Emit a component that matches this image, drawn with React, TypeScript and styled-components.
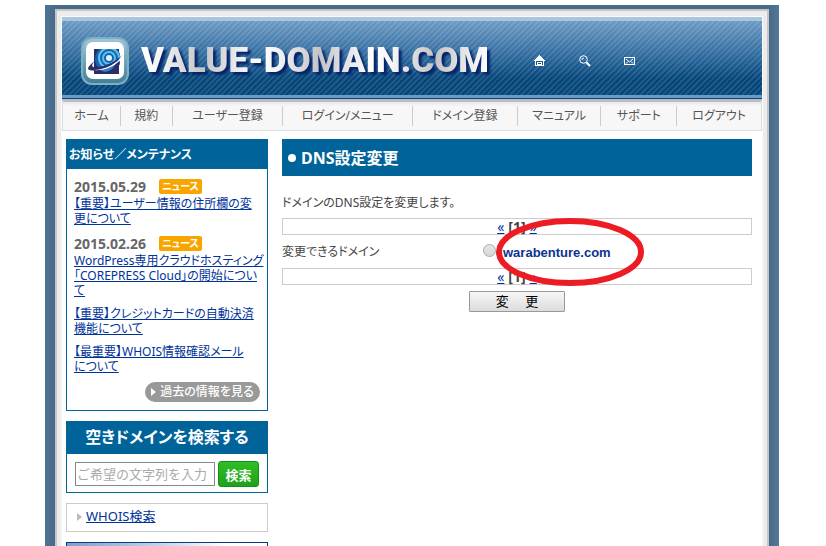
import React from "react";
import styled, { createGlobalStyle } from "styled-components";

const GlobalStyle = createGlobalStyle`
  *, *::before, *::after { box-sizing: border-box; }
  body {
    margin: 0;
    background: #fff;
    color: #444;
    font-family: "Noto Sans", "Noto Sans CJK JP", sans-serif;
    font-size: 12px;
    line-height: 15px;
    font-feature-settings: "palt";
  }
  a { color: #039; }
  h1, h2, p, ul { margin: 0; padding: 0; }
  ul { list-style: none; }
  button, input { font-family: inherit; font-feature-settings: inherit; }
`;

const Backdrop = styled.div`
  display: flex;
  margin: 5px 47px 0 45px;
  padding: 4px 10px 0;
  min-height: calc(100vh - 5px);
  background: linear-gradient(90deg, #4f7496, #48698a 10px, #48698a calc(100% - 10px), #527899);
`;

const Frame = styled.div`
  flex: 1;
  display: flex;
  flex-direction: column;
  min-width: 0;
  padding: 6px 5px 0;
  background: #ececec;
  border: 2px solid #c5c6c8;
  border-bottom: 0;
`;

const Sheet = styled.div`
  flex: 1;
  display: flex;
  flex-direction: column;
  background: #fff;
  box-shadow: 0 0 0 1px #fafafa;
`;

const Header = styled.header`
  display: flex;
  align-items: center;
  height: 82px;
  padding: 3px 19px 0;
  border-top: 4px solid #a9c7dc;
  border-bottom: 1px solid #04457a;
  background:
    linear-gradient(#6b9cc6, #6b9cc6) bottom / 100% 3px no-repeat,
    repeating-linear-gradient(135deg, rgba(255, 255, 255, 0.11) 0 2px, transparent 2px 4px),
    linear-gradient(#6b9ac3 0%, #2f6a9e 45%, #04457a 75%, #04457a 100%);
`;

const Brand = styled.a`
  display: flex;
  align-items: center;
  gap: 12px;
  text-decoration: none;
`;

const BrandName = styled.span`
  font: 900 35px/44px Roboto, sans-serif;
  white-space: nowrap;
  color: transparent;
  background: repeating-linear-gradient(90deg, #fff 0, #f4f4f4 20px, #c4c4c8 62px, #e4e4e6 90px, #fff 116px);
  background-clip: text;
  filter: drop-shadow(3px 3px 1px #06246a);
`;

const Tools = styled.nav`
  display: flex;
  flex: 1;
  gap: 33px;
  padding-left: 45px;
`;

const ToolLink = styled.a`
  display: flex;
`;

const Menu = styled.nav`
  display: grid;
  grid-template-columns: 58fr 52fr 111fr 130fr 105fr 84fr 76fr 84fr;
  align-items: center;
  height: 32px;
  border: 1px solid #ddd;
  border-top: 3px solid #bcbcc2;
  background: linear-gradient(#e9e9ea, #f7f7f7 4px);
`;

const MenuLink = styled.a`
  display: flex;
  justify-content: center;
  align-items: center;
  height: 20px;
  padding-bottom: 2px;
  border-right: 1px solid #ccc;
  color: #555;
  text-decoration: none;
  white-space: nowrap;
  &:last-child { border-right: 0; }
`;

const Columns = styled.div`
  flex: 1;
  display: grid;
  grid-template-columns: 202px minmax(0, 1fr);
  gap: 14px;
  padding: 8px 10px 0 4px;
`;

const Sidebar = styled.aside`
  display: flex;
  flex-direction: column;
  gap: 10px;
`;

const Panel = styled.section`
  border: 1px solid #069;
`;

const PanelTitle = styled.h2<{ $centered?: boolean }>`
  height: ${(p) => (p.$centered ? 32 : 29)}px;
  padding: 0 2px;
  background: #00649a;
  color: #fff;
  font-size: ${(p) => (p.$centered ? 16 : 12)}px;
  font-weight: bold;
  line-height: ${(p) => (p.$centered ? 30 : 29)}px;
  text-align: ${(p) => (p.$centered ? "center" : "left")};
`;

const NewsList = styled.ul`
  display: flex;
  flex-direction: column;
  gap: 8px;
  padding: 10px 7px 8px;
  white-space: nowrap;
`;

const NewsMeta = styled.div`
  display: flex;
  align-items: center;
  gap: 13px;
  height: 15px;
  color: #666;
  font-size: 14px;
  font-weight: bold;
  margin-bottom: 2px;
`;

const Badge = styled.span`
  width: 43px;
  border-radius: 2px;
  background: #f8a500;
  color: #fff;
  font-size: 10px;
  text-align: center;
`;

const DatedItem = styled.li`
  & + & { margin-top: 2px; }
`;

const PastRow = styled.div`
  display: flex;
  justify-content: flex-end;
  padding: 0 7px 8px;
`;

const PastButton = styled.button`
  display: flex;
  align-items: center;
  justify-content: center;
  gap: 4px;
  width: 115px;
  height: 20px;
  padding: 0;
  border: 0;
  border-radius: 10px;
  background: #999;
  color: #fff;
  font-size: 12px;
  line-height: 18px;
  font-weight: 500;
  white-space: nowrap;
`;

const SearchForm = styled.form`
  display: flex;
  align-items: center;
  gap: 3px;
  padding: 7px 8px 5px;
`;

const SearchInput = styled.input`
  flex: 1;
  min-width: 0;
  height: 24px;
  padding: 0 1px;
  border: 1px solid #888;
  font-size: 13px;
  font-feature-settings: normal;
  &::placeholder { color: #aaa; opacity: 1; }
`;

const SearchButton = styled.button`
  width: 41px;
  height: 26px;
  padding: 0;
  border: 1px solid #169018;
  border-radius: 3px;
  background: linear-gradient(#30bd25, #1da31a);
  color: #fff;
  font-size: 13px;
  font-weight: bold;
`;

const LinkBox = styled.div`
  display: flex;
  align-items: center;
  gap: 4px;
  height: 29px;
  padding: 0 10px 2px;
  border: 1px solid #ccc;
  font-size: 13px;
`;

const Banner = styled.div`
  flex: 1;
  min-height: 4px;
  border: 1px solid #0c3a7e;
  border-bottom: 0;
  background: linear-gradient(90deg, #7f9fd0, #a9bfe2 30%, #fff 80%);
`;

const PageTitle = styled.h1`
  display: flex;
  align-items: center;
  gap: 5px;
  height: 37px;
  padding: 0 6px;
  background: #00649a;
  color: #fff;
  font-size: 16px;
  line-height: 20px;
`;

const Dot = styled.span`
  width: 8px;
  height: 8px;
  border-radius: 50%;
  background: #fff;
`;

const Lead = styled.p`
  margin: 19px 0 8px;
`;

const Pager = styled.nav`
  display: flex;
  justify-content: center;
  align-items: center;
  gap: 4px;
  height: 17px;
  border: 1px solid #ccc;
  font-size: 14px;
`;

const DomainRow = styled.div`
  display: grid;
  grid-template-columns: 20fr 27fr;
  align-items: center;
  height: 33px;
`;

const Choice = styled.div`
  display: flex;
  align-items: center;
  gap: 7px;
  padding-left: 1px;
`;

const Radio = styled.input`
  appearance: none;
  width: 13px;
  height: 13px;
  margin: 0 0 2px;
  border: 1px solid #aaa;
  border-radius: 50%;
  background: linear-gradient(#e6e6e6, #d6d6d6);
  &:checked { background: #555; }
`;

const DomainLabel = styled.label`
  position: relative;
  padding-top: 2px;
  color: #0c3390;
  font: bold 13px/15px "Liberation Sans", sans-serif;
`;

const Mark = styled.svg`
  position: absolute;
  left: -8px;
  top: 50%;
  transform: translateY(-50%);
  pointer-events: none;
`;

const SubmitRow = styled.div`
  display: flex;
  justify-content: center;
  padding-top: 6px;
`;

const SubmitButton = styled.button`
  width: 96px;
  height: 21px;
  padding: 0;
  border: 1px solid #999;
  border-radius: 1px;
  background: linear-gradient(#f6f6f6, #dcdcdc);
  color: #000;
  font-size: 13px;
  line-height: 17px;
  white-space: pre;
`;

const Emblem = () => (
  <svg width="48" height="48" viewBox="0 0 48 48" aria-hidden="true">
    <defs>
      <linearGradient id="rim" x1="0" y1="0" x2="0" y2="1">
        <stop offset="0" stopColor="#a2c8d9" />
        <stop offset="1" stopColor="#407f96" />
      </linearGradient>
      <clipPath id="tile"><rect x="13" y="12" width="26" height="25" /></clipPath>
    </defs>
    <rect x="1" y="1" width="46" height="46" rx="10" fill="url(#rim)" stroke="#7dafc5" strokeWidth="2" />
    <rect x="5" y="5" width="38" height="37" rx="7" fill="#fff" />
    <rect x="13" y="12" width="25" height="25" fill="#2b2d66" />
    <g clipPath="url(#tile)">
      <circle cx="27" cy="22" r="13" fill="#1564b0" />
      <g fill="none" stroke="#5cc1ed" strokeWidth="2">
        <circle cx="28" cy="21" r="10" />
        <circle cx="28" cy="21" r="6" />
      </g>
      <circle cx="28" cy="21" r="3" fill="#d8f3ff" />
      <path d="M13 31 Q25 31 38 21 V37 H13Z" fill="#2b2d66" />
      <path d="M17 30 Q29 29 36 23 Q33 34 24 35 Q19 34 17 30Z" fill="#327fc2" />
    </g>
    <path d="M14 24 C4 31 5 35 16 33 C27 31 38 25 41 18 C36 24 26 29 17 30 C11 31 9 29 14 24Z" fill="#2b2d66" />
    <path d="M12 33 C25 33 36 26 41 19 L41 21 C34 30 23 34 12 33Z" fill="#fff" />
  </svg>
);

const HomeIcon = () => (
  <svg width="12" height="12" viewBox="0 0 12 12" shapeRendering="crispEdges" aria-hidden="true">
    <path d="M5 0 H6 V1 H7 V2 H8 V3 H9 V4 H10 V5 H11 V6 H10 V11 H1 V6 H0 V5 H1 V4 H2 V3 H3 V2 H4 V1 H5Z" fill="#fff" />
    <path d="M2 6 H9 V10 H2Z" fill="#1a5588" />
    <path d="M3 7 H8 V10 H3Z" fill="#fff" />
    <path d="M4 8 H7 V9 H4Z" fill="#1a5588" />
  </svg>
);

const SearchIcon = () => (
  <svg width="12" height="12" viewBox="0 0 12 12" fill="none" stroke="#fff" aria-hidden="true">
    <circle cx="4.5" cy="4.5" r="3.8" />
    <path d="M3 5 Q3 3 5 3" />
    <path d="M7.5 7.5 L11 11" strokeWidth="2" />
  </svg>
);

const MailIcon = () => (
  <svg width="12" height="12" viewBox="0 0 12 12" fill="none" stroke="#fff" aria-hidden="true">
    <rect x="0.5" y="2.5" width="10" height="7" />
    <path d="M2 4 L5.5 7 L9 4 M2 8.5 L4 6.5 M9 8.5 L7 6.5" />
  </svg>
);

const Arrow = ({ color }: { color: string }) => (
  <svg width="5" height="8" viewBox="0 0 5 8" aria-hidden="true">
    <path d="M0 0 L5 4 L0 8Z" fill={color} />
  </svg>
);

const menuItems = ["ホーム", "規約", "ユーザー登録", "ログイン/メニュー", "ドメイン登録", "マニュアル", "サポート", "ログアウト"];

const PageLinks = () => (
  <Pager aria-label="ページ">
    <a href="#prev">«</a>
    <b>[1]</b>
    <a href="#next">»</a>
  </Pager>
);

export default function App() {
  return (
    <>
      <GlobalStyle />
      <Backdrop>
        <Frame>
          <Sheet>
            <Header>
              <Brand href="#top">
                <Emblem />
                <BrandName>VALUE-DOMAIN.COM</BrandName>
              </Brand>
              <Tools>
                <ToolLink href="#home" aria-label="ホーム"><HomeIcon /></ToolLink>
                <ToolLink href="#search" aria-label="検索"><SearchIcon /></ToolLink>
                <ToolLink href="#mail" aria-label="メール"><MailIcon /></ToolLink>
              </Tools>
            </Header>
            <Menu>
              {menuItems.map((item) => (
                <MenuLink key={item} href="#menu">{item}</MenuLink>
              ))}
            </Menu>
            <Columns>
              <Sidebar>
                <Panel>
                  <PanelTitle>お知らせ／メンテナンス</PanelTitle>
                  <NewsList>
                    <DatedItem>
                      <NewsMeta>2015.05.29<Badge>ニュース</Badge></NewsMeta>
                      <a href="#n1">【重要】ユーザー情報の住所欄の変<br />更について</a>
                    </DatedItem>
                    <DatedItem>
                      <NewsMeta>2015.02.26<Badge>ニュース</Badge></NewsMeta>
                      <a href="#n2">WordPress専用クラウドホスティング<br />「COREPRESS Cloud」の開始につい<br />て</a>
                    </DatedItem>
                    <li><a href="#n3">【重要】クレジットカードの自動決済<br />機能について</a></li>
                    <li><a href="#n4">【最重要】WHOIS情報確認メール<br />について</a></li>
                  </NewsList>
                  <PastRow>
                    <PastButton type="button"><Arrow color="#fff" />過去の情報を見る</PastButton>
                  </PastRow>
                </Panel>
                <Panel>
                  <PanelTitle $centered>空きドメインを検索する</PanelTitle>
                  <SearchForm>
                    <SearchInput type="text" placeholder="ご希望の文字列を入力" aria-label="ご希望の文字列を入力" />
                    <SearchButton type="button">検索</SearchButton>
                  </SearchForm>
                </Panel>
                <LinkBox><Arrow color="#bbb" /><a href="#whois">WHOIS検索</a></LinkBox>
                <Banner />
              </Sidebar>
              <main>
                <PageTitle><Dot />DNS設定変更</PageTitle>
                <Lead>ドメインのDNS設定を変更します。</Lead>
                <PageLinks />
                <DomainRow>
                  <span>変更できるドメイン</span>
                  <Choice>
                    <Radio type="radio" id="domain" name="domain" />
                    <DomainLabel htmlFor="domain">
                      warabenture.com
                      <Mark width="150" height="70" viewBox="0 0 150 70" aria-hidden="true">
                        <ellipse cx="75" cy="35" rx="71" ry="31" fill="none" stroke="#ed1c24" strokeWidth="6" />
                      </Mark>
                    </DomainLabel>
                  </Choice>
                </DomainRow>
                <PageLinks />
                <SubmitRow>
                  <SubmitButton type="button">{"変　 更"}</SubmitButton>
                </SubmitRow>
              </main>
            </Columns>
          </Sheet>
        </Frame>
      </Backdrop>
    </>
  );
}
